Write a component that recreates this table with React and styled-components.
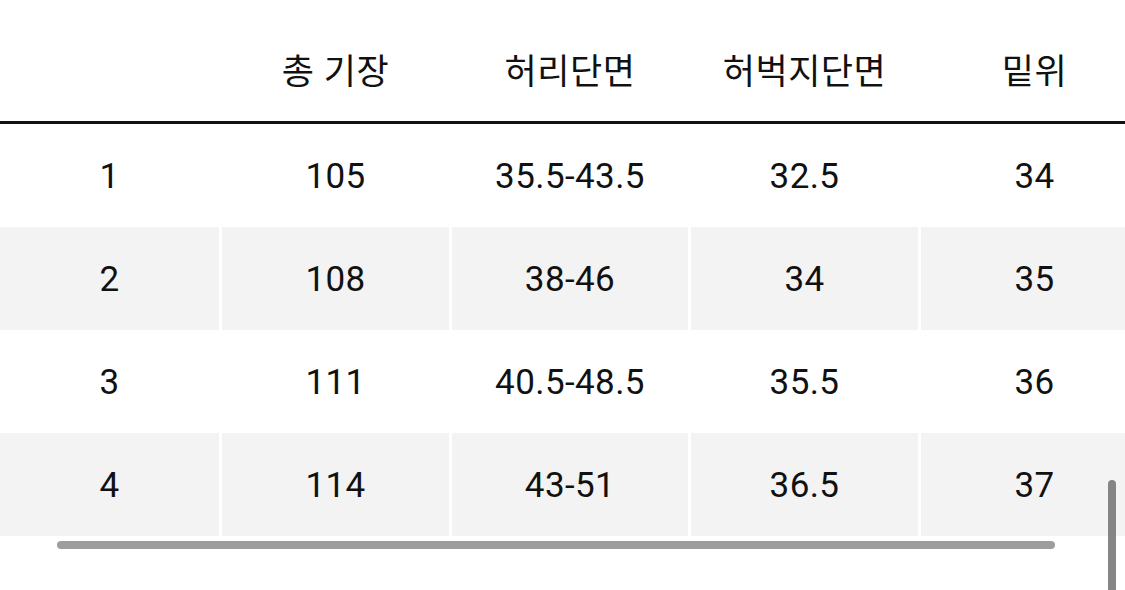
import React from "react";
import { styled, createGlobalStyle } from "styled-components";

const GlobalStyle = createGlobalStyle`
  html, body {
    margin: 0;
    padding: 0;
    background: #fff;
  }
  body {
    font-family: Roboto, "Noto Sans CJK KR", sans-serif;
    color: #111;
  }
`;

const columns = ["", "총 기장", "허리단면", "허벅지단면", "밑위"];

const rows = [
  ["1", "105", "35.5-43.5", "32.5", "34"],
  ["2", "108", "38-46", "34", "35"],
  ["3", "111", "40.5-48.5", "35.5", "36"],
  ["4", "114", "43-51", "36.5", "37"],
];

function App() {
  return (
    <>
      <GlobalStyle />
      <Page>
        <Scroller>
          <Table>
            <HeaderRow>
              {columns.map((c, i) => (
                <HeadCell key={i}>{c}</HeadCell>
              ))}
            </HeaderRow>
            {rows.map((r, i) => (
              <BodyRow key={i}>
                {r.map((v, j) => (
                  <Cell key={j} $striped={i % 2 === 1}>
                    {v}
                  </Cell>
                ))}
              </BodyRow>
            ))}
          </Table>
        </Scroller>
        <HScrollbar />
        <VScrollbar />
      </Page>
    </>
  );
}

const Page = styled.div`
  position: relative;
  width: 1125px;
  height: 590px;
  overflow: hidden;
  background: #fff;
`;

const Scroller = styled.div`
  width: 100%;
  overflow: hidden;
`;

const Table = styled.div`
  width: 1148px;
  display: flex;
  flex-direction: column;
`;

const gridCols = `
  display: grid;
  grid-template-columns: 219px 227px 236px 227px 227px;
  column-gap: 3px;
`;

const HeaderRow = styled.div`
  ${gridCols}
  height: 121px;
  border-bottom: 3px solid #111;
`;

const HeadCell = styled.div`
  display: flex;
  align-items: center;
  justify-content: center;
  padding-top: 16px;
  font-size: 35px;
  letter-spacing: 0.5px;
  white-space: nowrap;
`;

const BodyRow = styled.div`
  ${gridCols}
  height: 103px;
`;

const Cell = styled.div`
  display: flex;
  align-items: center;
  justify-content: center;
  padding-top: 2px;
  font-size: 35px;
  letter-spacing: 0.4px;
  white-space: nowrap;
  background: ${(p) => (p.$striped ? "#f3f3f3" : "#fff")};
`;

const HScrollbar = styled.div`
  position: absolute;
  left: 57px;
  top: 541px;
  width: 998px;
  height: 8px;
  border-radius: 4px;
  background: #9d9d9d;
`;

const VScrollbar = styled.div`
  position: absolute;
  left: 1108px;
  top: 480px;
  width: 8px;
  height: 130px;
  border-radius: 4px;
  background: #858585;
`;

export default App;
